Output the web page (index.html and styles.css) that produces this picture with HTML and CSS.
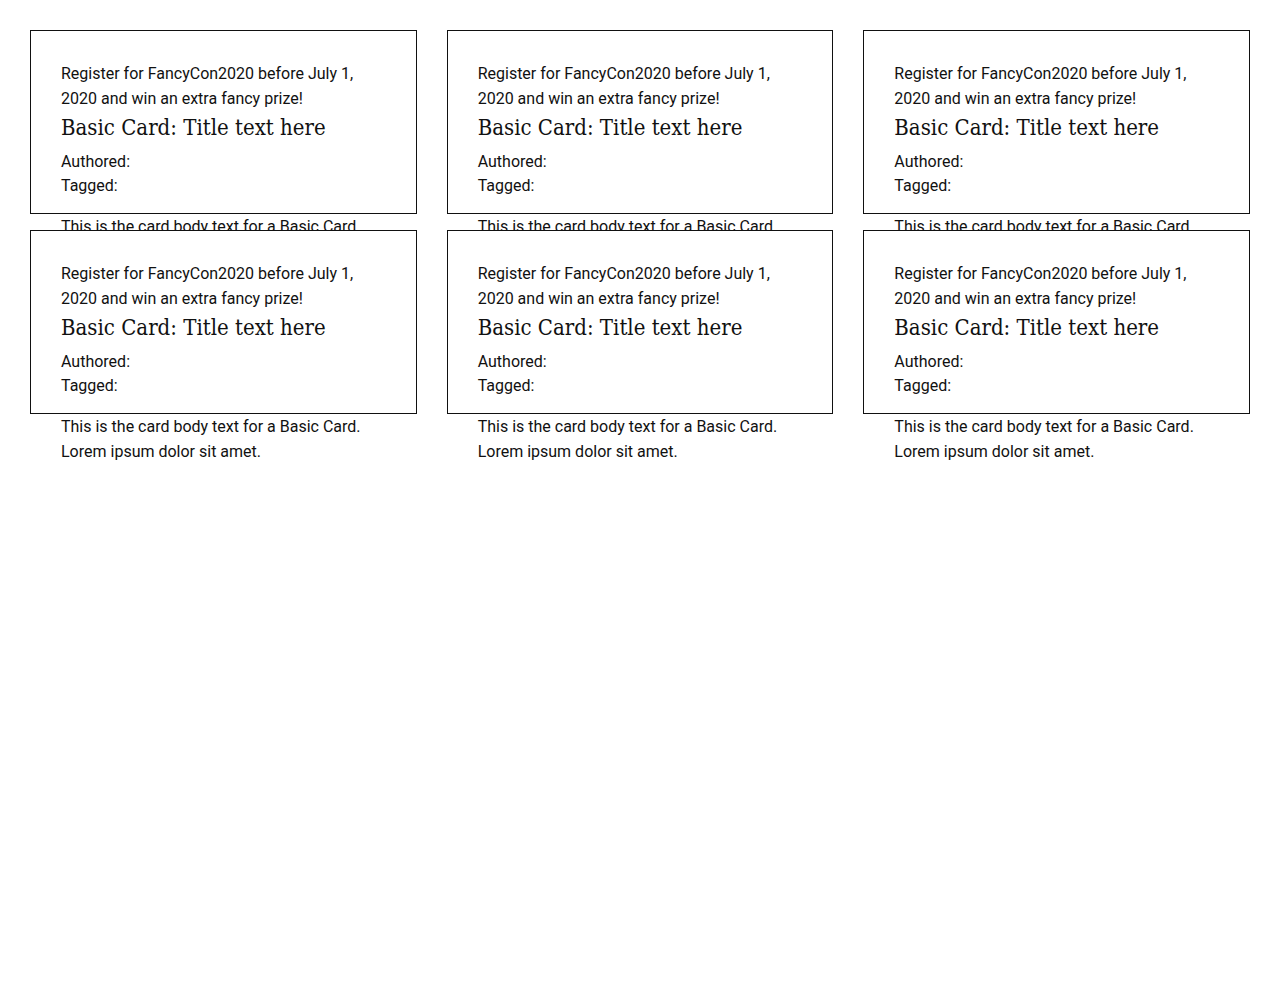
FILE: index.html
```html
<!DOCTYPE html>
<html lang="en">
<head>
<meta charset="utf-8">
<title>Basic Cards</title>
<link rel="stylesheet" href="styles.css">
</head>
<body>
<main class="card-grid">
  <article class="card">
    <p class="card-eyebrow">Register for FancyCon2020 before July 1, 2020 and win an extra fancy prize!</p>
    <h2 class="card-title">Basic Card: Title text here</h2>
    <div class="card-meta">
      <div class="card-meta-item">Authored:</div>
      <div class="card-meta-item">Tagged:</div>
    </div>
    <p class="card-body">This is the card body text for a Basic Card. Lorem ipsum dolor sit amet.</p>
  </article>
  <article class="card">
    <p class="card-eyebrow">Register for FancyCon2020 before July 1, 2020 and win an extra fancy prize!</p>
    <h2 class="card-title">Basic Card: Title text here</h2>
    <div class="card-meta">
      <div class="card-meta-item">Authored:</div>
      <div class="card-meta-item">Tagged:</div>
    </div>
    <p class="card-body">This is the card body text for a Basic Card. Lorem ipsum dolor sit amet.</p>
  </article>
  <article class="card">
    <p class="card-eyebrow">Register for FancyCon2020 before July 1, 2020 and win an extra fancy prize!</p>
    <h2 class="card-title">Basic Card: Title text here</h2>
    <div class="card-meta">
      <div class="card-meta-item">Authored:</div>
      <div class="card-meta-item">Tagged:</div>
    </div>
    <p class="card-body">This is the card body text for a Basic Card. Lorem ipsum dolor sit amet.</p>
  </article>
  <article class="card">
    <p class="card-eyebrow">Register for FancyCon2020 before July 1, 2020 and win an extra fancy prize!</p>
    <h2 class="card-title">Basic Card: Title text here</h2>
    <div class="card-meta">
      <div class="card-meta-item">Authored:</div>
      <div class="card-meta-item">Tagged:</div>
    </div>
    <p class="card-body">This is the card body text for a Basic Card. Lorem ipsum dolor sit amet.</p>
  </article>
  <article class="card">
    <p class="card-eyebrow">Register for FancyCon2020 before July 1, 2020 and win an extra fancy prize!</p>
    <h2 class="card-title">Basic Card: Title text here</h2>
    <div class="card-meta">
      <div class="card-meta-item">Authored:</div>
      <div class="card-meta-item">Tagged:</div>
    </div>
    <p class="card-body">This is the card body text for a Basic Card. Lorem ipsum dolor sit amet.</p>
  </article>
  <article class="card">
    <p class="card-eyebrow">Register for FancyCon2020 before July 1, 2020 and win an extra fancy prize!</p>
    <h2 class="card-title">Basic Card: Title text here</h2>
    <div class="card-meta">
      <div class="card-meta-item">Authored:</div>
      <div class="card-meta-item">Tagged:</div>
    </div>
    <p class="card-body">This is the card body text for a Basic Card. Lorem ipsum dolor sit amet.</p>
  </article>
</main>
</body>
</html>
```
FILE: styles.css
```css
html, body {
  margin: 0;
  padding: 0;
  background: #fff;
}

body {
  min-height: 100vh;
  font-family: Roboto, "Liberation Sans", sans-serif;
  font-size: 16px;
  line-height: 24px;
  color: #111;
}

.card-grid {
  display: grid;
  grid-template-columns: repeat(3, 1fr);
  grid-auto-rows: 184px;
  column-gap: 30px;
  row-gap: 16px;
  padding: 30px;
}

.card {
  box-sizing: border-box;
  border: 1px solid #111;
  background: #fff;
  padding: 30px 30px 0 30px;
  min-width: 0;
}

.card-eyebrow {
  margin: 0;
  line-height: 25px;
}

.card-title {
  margin: 3px 0 8px 0;
  font-family: "DejaVu Serif Condensed", "DejaVu Serif", serif;
  font-weight: normal;
  font-size: 22px;
  line-height: 28px;
  color: #111;
}

.card-meta {
  display: flex;
  flex-direction: column;
  line-height: 24px;
}

.card-body {
  margin: 16px 0 0 0;
  line-height: 25px;
}
```
